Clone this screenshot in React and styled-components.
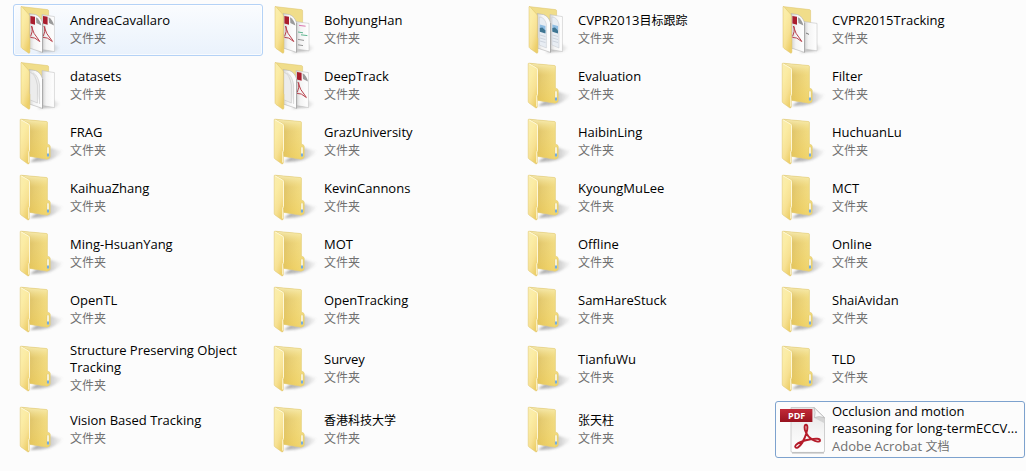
import React from "react";
import styled, { createGlobalStyle, css } from "styled-components";

const GlobalStyle = createGlobalStyle`
  *, *::before, *::after { box-sizing: border-box; }
  body {
    margin: 0;
    background: #fcfcfc;
    font-family: "Open Sans", "Noto Sans CJK SC", sans-serif;
  }
`;

const FileGrid = styled.ul`
  list-style: none;
  margin: 0;
  padding: 4px 1px 12px 13px;
  display: grid;
  grid-template-columns: repeat(auto-fill, minmax(220px, 1fr));
  gap: 4px;
`;

const Cell = styled.li`
  display: flex;
  min-width: 0;
`;

const frames = {
  hover: css`
    border-color: #b4d2f6;
    background: linear-gradient(#fafcfe, #eaf2fc);
    box-shadow: inset 0 0 0 1px rgba(255, 255, 255, 0.7);
  `,
  focus: css`
    border-color: #7da2ce;
  `,
};

const Tile = styled.button`
  flex: 1;
  min-width: 0;
  min-height: 52px;
  display: flex;
  align-items: center;
  gap: 4px;
  padding: 0 4px;
  border: 1px solid transparent;
  border-radius: 3px;
  background: transparent;
  font: inherit;
  text-align: left;
  ${({ $frame }) => frames[$frame]}
`;

const Icon = styled.svg`
  flex: none;
  width: 48px;
  height: 48px;
  overflow: visible;
`;

const Labels = styled.span`
  flex: 1;
  min-width: 0;
  display: flex;
  flex-direction: column;
  padding: 1px 0 2px;
`;

const Name = styled.span`
  font-size: 13px;
  line-height: 17px;
  color: #000;
`;

const Kind = styled.span`
  font-size: 13px;
  line-height: 18px;
  color: #707070;
  white-space: nowrap;
`;

const Han = styled.span`
  font-family: "Noto Sans CJK SC", sans-serif;
  font-size: 12px;
  line-height: 1;
`;

const BadgeText = styled.text`
  font-family: "Open Sans", sans-serif;
  font-size: 9px;
  font-weight: 700;
  fill: #fff;
`;

// Chinese runs are set one size smaller than the Latin text beside them.
function Mixed({ text }) {
  return text
    .split(/([\u4e00-\u9fff]+)/)
    .filter(Boolean)
    .map((run, i) =>
      /[\u4e00-\u9fff]/.test(run) ? <Han key={i} lang="zh-CN">{run}</Han> : run
    );
}

const HiddenSvg = styled.svg`
  position: absolute;
`;

function Defs() {
  return (
    <HiddenSvg width="0" height="0" aria-hidden="true">
      <defs>
        <linearGradient id="flap" x1="0" y1="0" x2=".6" y2="1">
          <stop offset="0" stopColor="#f9edb0" />
          <stop offset=".35" stopColor="#fbeca4" />
          <stop offset=".7" stopColor="#f7e193" />
          <stop offset="1" stopColor="#edcf6a" />
        </linearGradient>
        <linearGradient id="inside" x1="0" y1="0" x2="1" y2=".15">
          <stop offset=".3" stopColor="#d3b458" />
          <stop offset=".5" stopColor="#e0c468" />
          <stop offset=".8" stopColor="#edd478" />
          <stop offset="1" stopColor="#f1dc85" />
        </linearGradient>
        <linearGradient id="backTop" x1="0" y1="0" x2="0" y2="1">
          <stop offset="0" stopColor="#f9efb8" stopOpacity=".95" />
          <stop offset=".3" stopColor="#f4e08a" stopOpacity=".3" />
          <stop offset="1" stopColor="#efcb4c" stopOpacity=".45" />
        </linearGradient>
        <linearGradient id="shade" x1="0" y1="0" x2="1" y2="0">
          <stop offset="0" stopColor="#555" stopOpacity=".5" />
          <stop offset=".6" stopColor="#666" stopOpacity=".34" />
          <stop offset="1" stopColor="#888" stopOpacity=".04" />
        </linearGradient>
        <filter id="soft" x="-30%" y="-30%" width="160%" height="160%">
          <feGaussianBlur stdDeviation="1" />
        </filter>
        <linearGradient id="paper" x1="0" y1="0" x2="1" y2="0">
          <stop offset="0" stopColor="#d2d2d2" />
          <stop offset=".35" stopColor="#f4f4f4" />
          <stop offset="1" stopColor="#ffffff" />
        </linearGradient>
        <linearGradient id="sheet" x1="0" y1="0" x2="0" y2="1">
          <stop offset="0" stopColor="#e4e4e4" />
          <stop offset=".5" stopColor="#f4f4f4" />
          <stop offset="1" stopColor="#ffffff" />
        </linearGradient>
        <linearGradient id="badge" x1="0" y1="0" x2="0" y2="1">
          <stop offset="0" stopColor="#c22a38" />
          <stop offset="1" stopColor="#98131f" />
        </linearGradient>
      </defs>
    </HiddenSvg>
  );
}

const BACK = "M3 1.2 L28.4 3.5 Q29.4 3.6 29.4 4.6 V26 L31.4 27 Q32.2 27.4 32.2 28.4 V38.6 Q32.2 40 31 40.4 L29 41.2 L11.8 38.4 Z";

function EmptyFolder() {
  return (
    <Icon viewBox="0 0 48 48" aria-hidden="true">
      <path d="M31 29.6 L44.6 33 Q41 38.6 32 41.8 Q24 44 12 44 Z" fill="url(#shade)" filter="url(#soft)" />
      <path d={BACK} fill="url(#inside)" />
      <path d={BACK} fill="url(#backTop)" stroke="#e3cd7a" strokeWidth=".6" />
      <rect x="29" y="28.8" width="2" height="10" rx=".9" fill="#fffef3" stroke="#d7bd5c" strokeWidth=".4" />
      <path d="M30 35.6 V38.6" stroke="#4b96df" strokeWidth="1.5" />
      <path d="M2.2 1.8 Q2.3 .9 3.2 1.3 L11.2 5.8 Q12.1 6.4 12.1 7.6 V32.6 L11.3 34.4 V44.8 Q10.8 46.6 9.6 45.8 L3 41 Q2.2 40.4 2.2 39.3 Z" fill="url(#flap)" stroke="#dcc36a" strokeWidth=".5" />
      <path d="M3.2 1.9 L10.8 6.2 Q11.5 6.6 11.5 7.8 V32.4 L10.7 34.2 V44.6" fill="none" stroke="#fffbe0" strokeWidth=".9" />
    </Icon>
  );
}

const pages = {
  tall: { d: "M24 8.6 L36.4 10.6 V45.6 L24 43.4 Z", y: 9 },
  short: { d: "M24 15.6 L37 17.4 V44.8 L24 43 Z", y: 16 },
};

function PageMark({ kind, x, y }) {
  if (kind === "pdf") {
    return (
      <g transform={`translate(${x} ${y})`}>
        <path d="M0 0 L4.6 .8 V8.8 L0 7.6 Z" fill="#a91d2d" />
        <path d="M5.6 1.2 Q9.6 3.4 11 9.6 L6 7 Z" fill="#9a9a9a" />
        <path d="M.9 10 Q2.2 17 9.4 25.4 M0 21.4 Q4 20.6 9.4 25.6 M1.8 10.5 Q2.4 16 .2 20.4" fill="none" stroke="#b9404b" strokeWidth="1" />
      </g>
    );
  }
  if (kind === "image") {
    return (
      <g transform={`translate(${x} ${y})`}>
        <path d="M1 1 Q6 1 8 8 V32 L1 29 Z" fill="#e8edf3" stroke="#b8bec6" strokeWidth=".4" />
        <path d="M1.4 8.5 L7 10 V17 L1.4 15 Z" fill="#8fbde2" />
        <path d="M1.4 12 L4 11.6 L7 14.6 V17.6 L1.4 15.8 Z" fill="#3f7592" />
        <path d="M1.6 19 L7 20.5 M1.6 22 L7 23.5 M1.6 25 L7 26.5" stroke="#bac3ce" strokeWidth=".6" />
      </g>
    );
  }
  if (kind === "lines") {
    return (
      <g transform={`translate(${x} ${y})`} fill="none" strokeWidth=".9">
        <path d="M2 2.4 L8.6 3.2" stroke="#d765a5" />
        <path d="M1 9 L6 9.8 M4 11.8 L10.4 12.6" stroke="#4eae84" />
        <path d="M1 16.4 L7 17.4 M1 21.8 L6 22.6" stroke="#8b8b8b" />
      </g>
    );
  }
  if (kind === "curl") {
    return (
      <path
        transform={`translate(${x} ${y})`}
        d="M0 .6 Q5 1.6 7 13 V31 L0 28 M2.6 .8 Q8 4 9.2 13 V32"
        fill="#ececec" stroke="#bdbdbd" strokeWidth=".5"
      />
    );
  }
  if (kind === "tick") {
    return <path transform={`translate(${x} ${y})`} d="M1 10 L4 11.4" stroke="#777" />;
  }
  return null;
}

function FilledFolder({ front, back, low }) {
  const rear = low ? pages.short : pages.tall;
  return (
    <Icon viewBox="0 0 48 48" aria-hidden="true">
      <path d="M35 38 L41.5 41 Q42 44 36 45.6 L20 46.6 Z" fill="url(#shade)" filter="url(#soft)" />
      <path d="M3.2 .6 L29.6 3.6 Q30.6 3.8 30.6 5 V40 L11.6 38 Z" fill="#f0dd8a" stroke="#dcc573" strokeWidth=".5" />
      <path d={rear.d} fill="url(#paper)" stroke="#b8b8b8" strokeWidth=".5" />
      <PageMark kind={back} x={25} y={rear.y + 1} />
      <path d="M11.2 7.6 L17.6 8.6 Q22.6 10.4 24.6 17 V46.4 L11.2 42 Z" fill="url(#paper)" stroke="#a4a4a4" strokeWidth=".5" />
      <PageMark kind={front} x={12.4} y={10} />
      <path d="M24.6 17 V46.4" stroke="#8e8e8e" strokeWidth=".6" />
      <path d="M3 1 Q3.2 .3 4 .7 L10.8 8.4 Q11.4 9.2 11.4 10.5 V31 L11.9 32.6 V46 Q11.6 47.8 10.4 47 L4 42.4 Q3 41.6 3 40.6 Z" fill="url(#flap)" stroke="#dcc36a" strokeWidth=".5" />
    </Icon>
  );
}

function PdfIcon() {
  return (
    <Icon viewBox="0 0 48 48" aria-hidden="true">
      <path d="M11 1.5 H34 L44.5 11.5 V45 Q44.5 46.4 43 46.4 H12.4 Q11 46.4 11 45 Z" fill="url(#sheet)" stroke="#c4c4c4" strokeWidth=".8" />
      <path d="M12 47 H44" stroke="#a4a4a4" strokeWidth=".8" />
      <path d="M34 1.5 L44.5 11.8 Q39 9.4 34.5 11.6 Q36 6 34 1.5 Z" fill="#fafafa" stroke="#a8a8a8" strokeWidth=".6" />
      <path d="M34.5 12 Q39 9.8 44 12 L44 17 Z" fill="#bcbcbc" opacity=".5" />
      <rect x="0" y="3" width="32.4" height="13" fill="url(#badge)" />
      <BadgeText x="8" y="13">PDF</BadgeText>
      <path
        d="M26 26.6 C23.8 22.6 24.4 18.8 26 18.8 C28 18.8 27.6 23 26.4 27 C24.6 33.2 20.8 39.6 18 41.4 C15.6 42.8 14.2 40.6 16 38.8 C18.8 36 25 34.2 30.8 33.2 C35.6 32.4 40 32.4 40 34.4 C40 36.4 36 36 32 33.4 C29 31.4 27 28.8 26 26.6 Z"
        fill="none" stroke="#b51c2a" strokeWidth="1.9" strokeLinejoin="round"
      />
    </Icon>
  );
}

const FOLDER = "文件夹";

const files = [
  { name: "AndreaCavallaro", front: "pdf", back: "pdf", frame: "hover" },
  { name: "BohyungHan", front: "pdf", back: "lines", low: true },
  { name: "CVPR2013目标跟踪", front: "image", back: "image" },
  { name: "CVPR2015Tracking", front: "pdf", back: "tick", low: true },
  { name: "datasets", front: "curl", back: "blank" },
  { name: "DeepTrack", front: "curl", back: "pdf" },
  { name: "Evaluation" },
  { name: "Filter" },
  { name: "FRAG" },
  { name: "GrazUniversity" },
  { name: "HaibinLing" },
  { name: "HuchuanLu" },
  { name: "KaihuaZhang" },
  { name: "KevinCannons" },
  { name: "KyoungMuLee" },
  { name: "MCT" },
  { name: "Ming-HsuanYang" },
  { name: "MOT" },
  { name: "Offline" },
  { name: "Online" },
  { name: "OpenTL" },
  { name: "OpenTracking" },
  { name: "SamHareStuck" },
  { name: "ShaiAvidan" },
  { name: "Structure Preserving Object Tracking" },
  { name: "Survey" },
  { name: "TianfuWu" },
  { name: "TLD" },
  { name: "Vision Based Tracking" },
  { name: "香港科技大学" },
  { name: "张天柱" },
  { name: "Occlusion and motion reasoning for long-termECCV...", kind: "Adobe Acrobat 文档", pdf: true, frame: "focus" },
];

function FileIcon({ file }) {
  if (file.pdf) return <PdfIcon />;
  if (file.front) return <FilledFolder front={file.front} back={file.back} low={file.low} />;
  return <EmptyFolder />;
}

export default function App() {
  return (
    <main>
      <GlobalStyle />
      <Defs />
      <FileGrid>
        {files.map((file) => (
          <Cell key={file.name}>
            <Tile type="button" $frame={file.frame}>
              <FileIcon file={file} />
              <Labels>
                <Name><Mixed text={file.name} /></Name>
                <Kind><Mixed text={file.kind || FOLDER} /></Kind>
              </Labels>
            </Tile>
          </Cell>
        ))}
      </FileGrid>
    </main>
  );
}
